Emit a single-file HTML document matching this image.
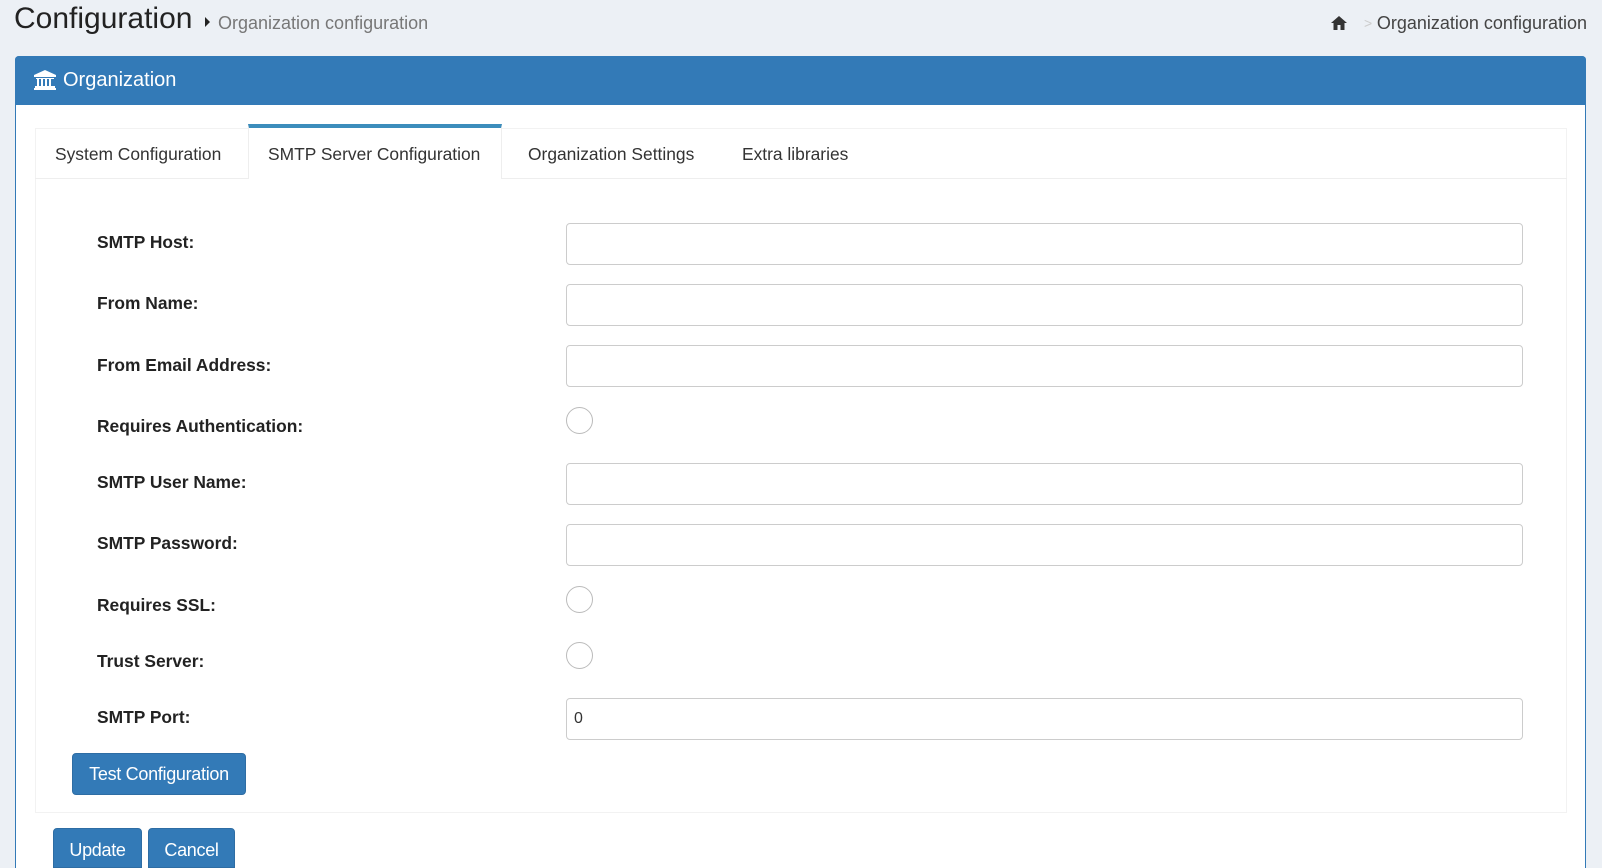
<!DOCTYPE html>
<html style="width:1602px;height:868px;overflow:hidden"><head><style>
*{box-sizing:border-box;margin:0;padding:0}
body{width:1602px;height:868px;background:#ecf0f5;font-family:"Liberation Sans",sans-serif;position:relative;overflow:hidden;color:#333}
.abs{position:absolute}
.title{left:14px;top:2px;font-size:30px;color:#222}
.bc{left:204px;top:13px;font-size:18px;color:#777}
.rbc{right:15px;top:13px;font-size:18px;color:#444}
.panel{left:15px;top:56px;width:1571px;height:812px;background:#fff;border:1px solid #337ab7;border-bottom:none;border-radius:4px 4px 0 0}
.ph{left:15px;top:56px;width:1571px;height:49px;background:#337ab7;border-radius:4px 4px 0 0;color:#fff;font-size:20px;padding:13px 0 0 48px}
.tabs{left:35px;top:128px;width:1532px;height:685px;border:1px solid #f2f2f2;background:#fff}
.tabbar{left:35px;top:178px;width:1532px;border-top:1px solid #eee}
.tab{top:144px;font-size:17.4px;color:#333}
.active{left:248px;top:124px;width:254px;height:55px;border-top:4px solid #3c8dbc;background:#fff;border-left:1px solid #eee;border-right:1px solid #eee}
.lbl{left:97px;font-size:17.4px;font-weight:bold;color:#222}
.inp{left:566px;width:957px;height:42px;border:1px solid #ccc;border-radius:4px;background:#fff}
.rad{left:566px;width:27px;height:27px;border:1px solid #bbb;border-radius:50%;background:#fff}
.btn{background:#337ab7;color:#fff;border:1px solid #2e6da4;border-radius:4px;font-size:18px;text-align:center;letter-spacing:-0.3px}
</style></head><body>
<div class="abs title">Configuration</div>
<div class="abs" style="left:205px;top:17px;width:0;height:0;border-left:5px solid #222;border-top:5px solid transparent;border-bottom:5px solid transparent"></div>
<div class="abs bc" style="left:218px">Organization configuration</div>
<svg class="abs" style="left:1330px;top:15px" width="18" height="16" viewBox="0 0 18 16"><path d="M9 1L1 8h2.5v7h4v-5h3v5h4V8H17z" fill="#333"/></svg>
<div class="abs" style="left:1364px;top:15px;font-size:14px;color:#ccc">&gt;</div>
<div class="abs rbc">Organization configuration</div>
<div class="abs panel"></div>
<div class="abs ph">Organization</div>
<svg class="abs" style="left:34px;top:70px" width="22" height="20" viewBox="0 0 22 20"><path d="M11 0L0 5v2h22V5z M2 8h18v1H2z M3 9h2v7H3z M7 9h2v7H7z M11 9h2v7h-2z M15 9h2v7h-2z M1 16h20v2H1z M0 18h22v2H0z" fill="#fff"/></svg>
<div class="abs tabs"></div>
<div class="abs tabbar"></div>
<div class="abs active"></div>
<div class="abs tab" style="left:55px">System Configuration</div>
<div class="abs tab" style="left:268px">SMTP Server Configuration</div>
<div class="abs tab" style="left:528px">Organization Settings</div>
<div class="abs tab" style="left:742px">Extra libraries</div>
<div class="abs lbl" style="top:232px">SMTP Host:</div>
<div class="abs lbl" style="top:293px">From Name:</div>
<div class="abs lbl" style="top:355px">From Email Address:</div>
<div class="abs lbl" style="top:416px">Requires Authentication:</div>
<div class="abs lbl" style="top:472px">SMTP User Name:</div>
<div class="abs lbl" style="top:533px">SMTP Password:</div>
<div class="abs lbl" style="top:595px">Requires SSL:</div>
<div class="abs lbl" style="top:651px">Trust Server:</div>
<div class="abs lbl" style="top:707px">SMTP Port:</div>
<div class="abs inp" style="top:223px"></div>
<div class="abs inp" style="top:284px"></div>
<div class="abs inp" style="top:345px"></div>
<div class="abs rad" style="top:407px"></div>
<div class="abs inp" style="top:463px"></div>
<div class="abs inp" style="top:524px"></div>
<div class="abs rad" style="top:586px"></div>
<div class="abs rad" style="top:642px"></div>
<div class="abs inp" style="top:698px;padding:11px 7px;font-size:16px">0</div>
<div class="abs btn" style="left:72px;top:753px;width:174px;height:42px;padding-top:10px">Test Configuration</div>
<div class="abs btn" style="left:53px;top:828px;width:89px;height:40px;padding-top:11px;border-radius:4px 4px 0 0">Update</div>
<div class="abs btn" style="left:148px;top:828px;width:87px;height:40px;padding-top:11px;border-radius:4px 4px 0 0">Cancel</div>
</body></html>
